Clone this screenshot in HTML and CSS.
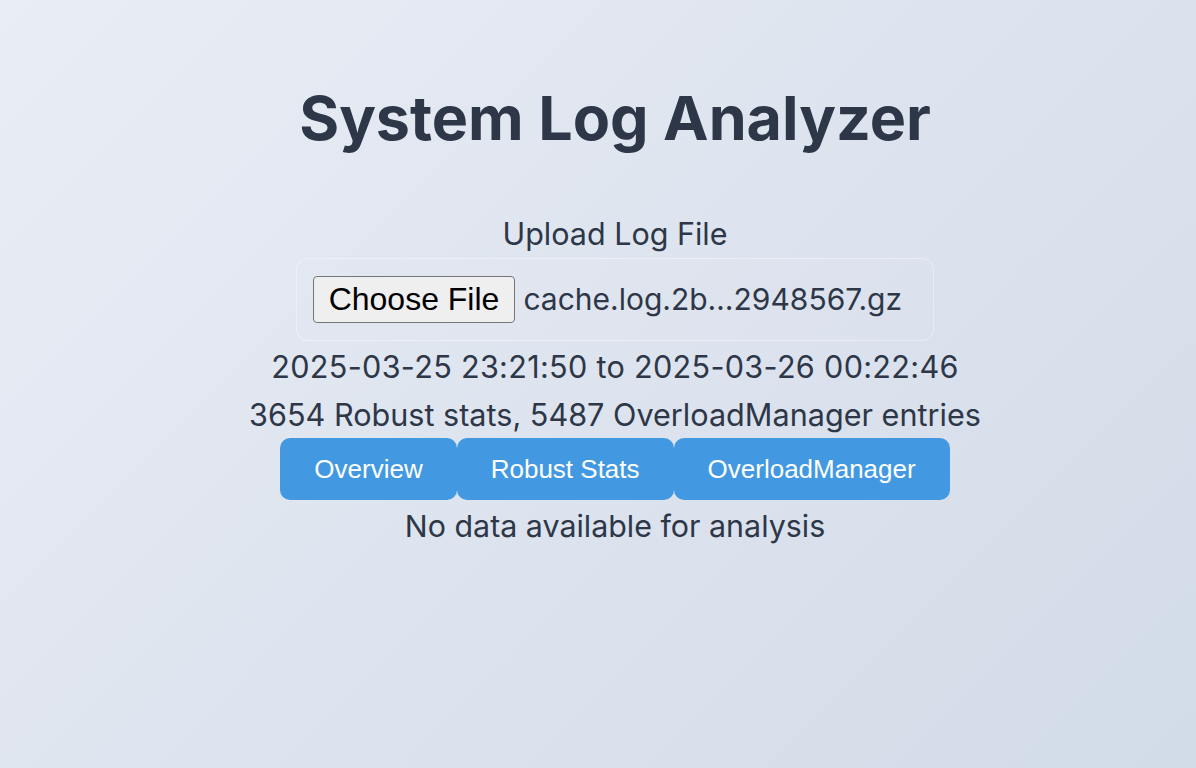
FILE: index.html
```html
<!DOCTYPE html>
<html lang="en">
<head>
<meta charset="utf-8">
<title>System Log Analyzer</title>
<link rel="stylesheet" href="styles.css">
</head>
<body>
<main class="app">
  <h1 class="title">System Log Analyzer</h1>
  <section class="upload">
    <label class="upload-label">Upload Log File</label>
    <div class="filebox">
      <button class="file-btn" type="button">Choose File</button>
      <span class="file-name">cache.log.2b…2948567.gz</span>
    </div>
  </section>
  <p class="info range">2025-03-25 23:21:50 to 2025-03-26 00:22:46</p>
  <p class="info">3654 Robust stats, 5487 OverloadManager entries</p>
  <nav class="tabs">
    <button class="tab" type="button">Overview</button>
    <button class="tab" type="button">Robust Stats</button>
    <button class="tab" type="button">OverloadManager</button>
  </nav>
  <p class="empty">No data available for analysis</p>
</main>
</body>
</html>
```

FILE: styles.css
```css
html, body {
  margin: 0;
  padding: 0;
}
body {
  min-height: 100vh;
  background: linear-gradient(135deg, #e9edf5 0%, #d2dbe8 100%);
  font-family: Inter, "Noto Sans", sans-serif;
  color: #2d3748;
}
.app {
  display: flex;
  flex-direction: column;
  align-items: center;
  padding: 79px 0 0 34px;
}
.title {
  margin: 0;
  font-size: 61px;
  line-height: 78px;
  font-weight: 700;
  color: #2d3748;
}
.upload {
  display: flex;
  flex-direction: column;
  align-items: center;
  margin-top: 53px;
}
.upload-label {
  font-size: 30.5px;
  line-height: 48px;
}
.filebox {
  display: flex;
  align-items: center;
  gap: 8px;
  padding: 17px 16px;
  border: 1px solid rgba(255, 255, 255, 0.35);
  border-radius: 12px;
  background: rgba(255, 255, 255, 0.03);
  margin-bottom: 2px;
}
.file-btn {
  box-sizing: border-box;
  height: 47px;
  padding: 0 15px;
  font-family: "Liberation Sans", Arial, sans-serif;
  font-size: 32px;
  color: #000;
  background: #efefef;
  border: 1px solid #767676;
  border-radius: 4px;
}
.file-name {
  width: 394px;
  font-size: 30px;
  line-height: 47px;
}
.info {
  margin: 0;
  font-size: 30.6px;
  line-height: 48px;
}
.range {
  letter-spacing: 0.3px;
}
.tabs {
  display: flex;
  margin-top: -1px;
}
.tab {
  height: 62px;
  padding: 0 34px;
  border: none;
  border-radius: 10px;
  background: #4299e1;
  color: #fff;
  font-family: "Liberation Sans", Arial, sans-serif;
  font-size: 26px;
}
.empty {
  margin: 2px 0 0;
  font-size: 30.4px;
  line-height: 48px;
}
```
